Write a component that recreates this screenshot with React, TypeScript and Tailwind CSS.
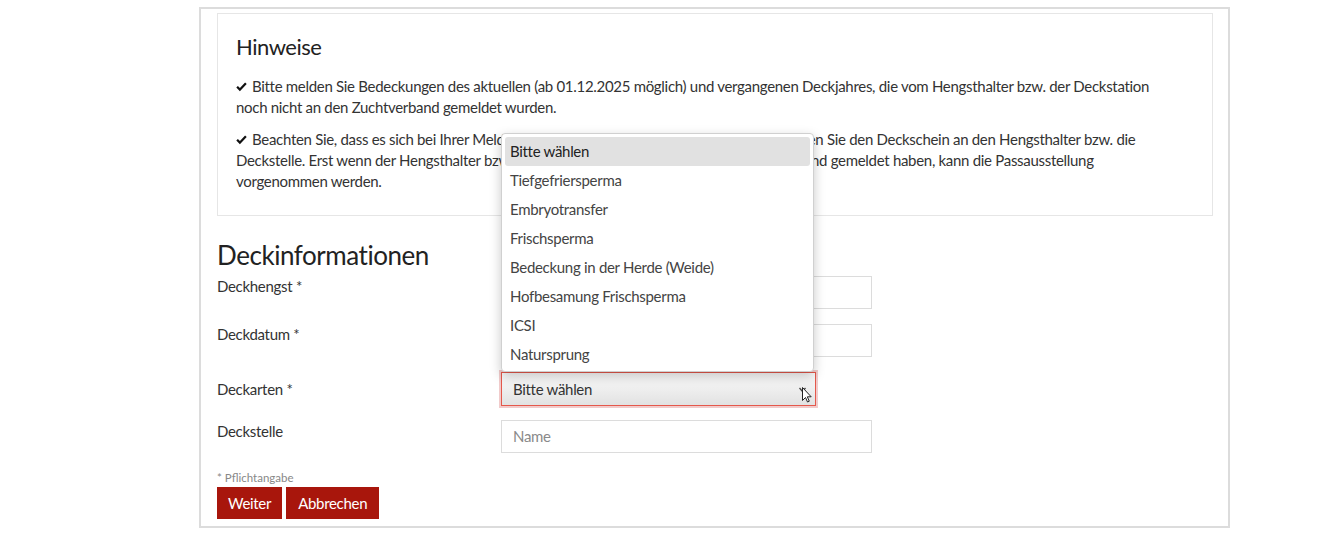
import React from "react";

const deckarten = [
  "Bitte wählen",
  "Tiefgefriersperma",
  "Embryotransfer",
  "Frischsperma",
  "Bedeckung in der Herde (Weide)",
  "Hofbesamung Frischsperma",
  "ICSI",
  "Natursprung",
];

function Check() {
  return (
    <svg className="inline-block mr-[5px] -mt-[3px] align-middle" width="11" height="10" viewBox="0 0 11 10">
      <path d="M0.3 5.6 L1.9 4 L3.9 6 L9.1 0.4 L10.7 2 L3.9 9.3 Z" fill="#111" />
    </svg>
  );
}

export default function App() {
  return (
    <div
      className="w-[1338px] h-[534px] bg-white text-[#333] overflow-hidden tracking-[-0.3px]"
      style={{ fontFamily: 'Lato, "Open Sans", sans-serif' }}
    >
      <div className="ml-[199px] mt-[7px] w-[1031px] h-[521px] border-2 border-[#dcdcdc] px-[16px] pt-[4px]">
        {/* Hinweise */}
        <div className="border border-[#e6e6e6] w-[996px] h-[203px] px-[18px] pt-[19px]">
          <h2 className="text-[22px] leading-[28px] text-[#222] mb-[15px] tracking-[-0.5px]">Hinweise</h2>
          <p className="text-[15px] leading-[21px] mb-[11px] whitespace-nowrap">
            <Check />
            Bitte melden Sie Bedeckungen des aktuellen (ab 01.12.2025 möglich) und vergangenen Deckjahres, die vom
            Hengsthalter bzw. der Deckstation
            <br />
            noch nicht an den Zuchtverband gemeldet wurden.
          </p>
          <p className="text-[15px] leading-[21px] whitespace-nowrap">
            <Check />
            Beachten Sie, dass es sich bei Ihrer Meldung nur um eine Vormeldung handelt. Bitte senden Sie den Deckschein
            an den Hengsthalter bzw. die
            <br />
            Deckstelle. Erst wenn der Hengsthalter bzw. die Deckstelle die Bedeckung beim Zuchtverband gemeldet haben,
            kann die Passausstellung
            <br />
            vorgenommen werden.
          </p>
        </div>

        {/* Deckinformationen */}
        <h2 className="text-[26px] leading-[34px] text-[#222] mt-[22px] tracking-[-0.45px]">Deckinformationen</h2>

        <div className="relative mt-[4px]">
          <div className="grid grid-cols-[284px_371px] auto-rows-[48px] text-[15px] leading-[21px]">
            <label>Deckhengst *</label>
            <div>
              <div className="h-[33px] border border-[#dcdcdc]" />
            </div>

            <label>Deckdatum *</label>
            <div>
              <div className="h-[33px] border border-[#dcdcdc]" />
            </div>

            <label className="pt-[7px]">Deckarten *</label>
            <div>
              <div className="relative w-[315px] h-[34px] border border-[#e5584b] bg-gradient-to-b from-[#fbfbfb] to-[#e2e2e2] shadow-[0_0_0_2px_rgba(225,140,140,0.45)] flex items-center pl-[11px]">
                <span className="text-[#333]">Bitte wählen</span>
                <svg className="absolute right-[1px] top-[11px]" width="16" height="22" viewBox="0 0 16 22">
                  <path d="M1.5 4 L4.5 7.5 L7.5 4" fill="none" stroke="#444" strokeWidth="1.3" />
                  <path
                    d="M4.5 3.5 L4.5 16.5 L7.5 13.5 L9.5 18 L11.3 17.2 L9.3 12.8 L13.2 12.8 Z"
                    fill="#fff"
                    stroke="#222"
                    strokeWidth="1"
                    strokeLinejoin="round"
                  />
                </svg>
              </div>
            </div>

            <label className="pt-[1px]">Deckstelle</label>
            <div>
              <div className="h-[33px] border border-[#dcdcdc] flex items-center pl-[11px] text-[#8a8a8a]">Name</div>
            </div>
          </div>

          <div className="text-[11.5px] text-[#888] mt-[3px] leading-[14px] tracking-normal">* Pflichtangabe</div>
          <div className="flex gap-[4px] mt-[2px]">
            <button className="h-[32px] px-[11px] bg-[#a8160c] text-white text-[15px]">Weiter</button>
            <button className="h-[32px] px-[12px] bg-[#a8160c] text-white text-[15px]">Abbrechen</button>
          </div>

          {/* geöffnete Auswahlliste */}
          <div className="absolute left-[284px] top-[-143px] w-[313px] h-[239px] bg-white rounded-[4px] border border-[#d0d0d0] shadow-[0_4px_12px_rgba(0,0,0,0.22)] p-[3px] text-[15px] text-[#444]">
            {deckarten.map((opt, i) => (
              <div
                key={opt}
                className={`h-[29px] flex items-center pl-[5px] rounded-[3px] ${i === 0 ? "bg-[#e1e1e1] text-[#222]" : ""}`}
              >
                {opt}
              </div>
            ))}
          </div>
        </div>
      </div>
    </div>
  );
}
